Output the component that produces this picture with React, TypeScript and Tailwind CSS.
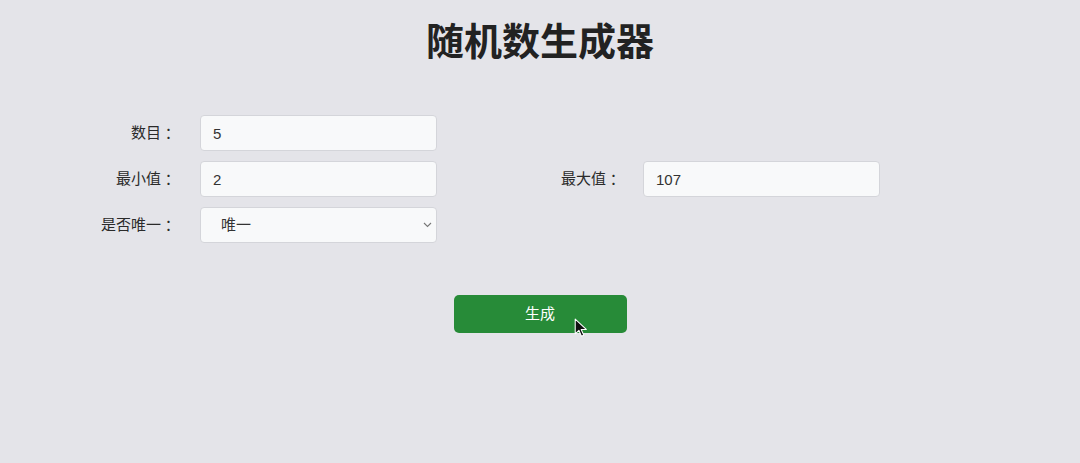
import React from 'react';

const font = { fontFamily: '"Liberation Sans", "Noto Sans CJK SC", sans-serif' };
const colonFont = { fontFamily: '"Noto Sans CJK TC", sans-serif' };

function Field({ value }: { value: string }) {
  return (
    <input
      readOnly
      value={value}
      className="h-[36px] w-[237px] rounded-[4px] border border-[#d4d5da] bg-[#f8f9fa] px-[12px] text-[15px] text-[#333] outline-none"
      style={font}
    />
  );
}

function Label({ text, right }: { text: string; right?: boolean }) {
  return (
    <label className={`flex h-[36px] items-center justify-end ${right ? 'pr-[22px]' : 'pr-[24px]'}`}>
      {text}
      <span style={colonFont}>：</span>
    </label>
  );
}

export default function App() {
  return (
    <div className="relative min-h-[463px] w-full bg-[#e4e4e9] text-[#222]" style={font}>
      <h1 className="pt-[18px] text-center text-[38px] font-bold leading-[48px] text-[#222]">随机数生成器</h1>

      <div className="mt-[49px] grid grid-cols-[200px_237px_206px_237px] gap-y-[10px] text-[15px] text-[#2a2a2a]">
        <Label text="数目" />
        <Field value="5" />
        <div />
        <div />

        <Label text="最小值" />
        <Field value="2" />
        <Label text="最大值" right />
        <Field value="107" />

        <Label text="是否唯一" />
        <div className="relative h-[36px] w-[237px]">
          <select
            defaultValue="unique"
            className="h-[36px] w-[237px] appearance-none rounded-[4px] border border-[#d4d5da] bg-[#f8f9fa] pl-[20px] text-[15px] text-[#333] outline-none"
            style={font}
          >
            <option value="unique">唯一</option>
            <option value="repeat">可重复</option>
          </select>
          <svg className="pointer-events-none absolute right-[5px] top-[15px]" width="9" height="6" viewBox="0 0 9 6" fill="none">
            <path d="M1 1l3.5 3.5L8 1" stroke="#777" strokeWidth="1.1" />
          </svg>
        </div>
        <div />
        <div />
      </div>

      <div className="mt-[52px] flex justify-center">
        <button className="relative h-[38px] w-[173px] rounded-[5px] bg-[#278b38] text-[15px] text-white" style={font}>
          生成
          <svg className="absolute left-[120px] top-[23px]" width="14" height="20" viewBox="0 0 13 19">
            <path d="M1 1v14l3.5-3.3 2.4 5.6 2.2-1-2.4-5.4H11.5z" fill="#111" stroke="#fff" strokeWidth="1" strokeLinejoin="round" />
          </svg>
        </button>
      </div>
    </div>
  );
}
